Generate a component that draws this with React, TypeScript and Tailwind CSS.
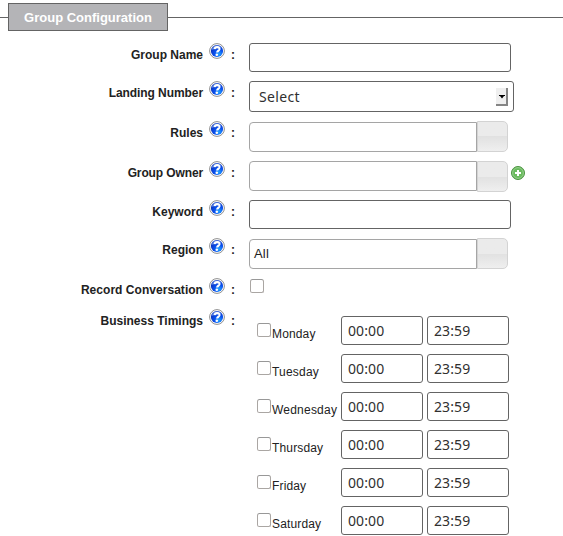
import React from "react";

const help = (
  <svg width="17" height="17" viewBox="0 0 17 17" className="block shrink-0">
    <defs>
      <radialGradient id="helpBlue" cx="0.65" cy="0.75" r="0.8">
        <stop offset="0" stopColor="#1fa4ff" />
        <stop offset="0.45" stopColor="#0a50ee" />
        <stop offset="1" stopColor="#0a2cb0" />
      </radialGradient>
    </defs>
    <circle cx="8" cy="8" r="7.4" fill="#fff" stroke="#8f8f8f" strokeWidth="1" />
    <circle cx="8" cy="8" r="6.1" fill="url(#helpBlue)" />
    <path d="M2.6 7A5.5 5.5 0 0 1 12.8 5Q8 5 2.6 7" fill="#7ba6f5" opacity="0.6" />
    <path d="M5.6 6.2C5.8 4.6 7 4 8.3 4.1C10 4.2 10.8 5.2 10.4 6.5C10 7.6 8.3 7.8 8.1 9.5" fill="none" stroke="#fff" strokeWidth="2.1" />
    <circle cx="7.8" cy="11.7" r="1.3" fill="#fff" />
  </svg>
);

function Row({ label, height, tracking = "", children }: { label: string; height: string; tracking?: string; children: React.ReactNode }) {
  return (
    <div className={`flex items-start ${height}`}>
      <div className={`w-[203px] shrink-0 pt-1 text-right text-xs leading-4 font-bold whitespace-nowrap ${tracking}`}>{label}</div>
      <div className="ml-1.5 w-[17px] shrink-0">{help}</div>
      <div className="ml-[5px] w-[18px] shrink-0 pt-1 text-xs leading-4 font-bold">:</div>
      {children}
    </div>
  );
}

function Combo({ value = "", align = "items-end" }: { value?: string; align?: string }) {
  return (
    <div className={`flex ${align}`}>
      <div className="flex h-[30px] w-[228px] items-center rounded-l-[4px] border border-[#a5a5a5] pl-1 text-[13px] tracking-[0.2px]">{value}</div>
      <div className="h-[31px] w-[31px] rounded-r-[5px] border border-[#d3d3d3] bg-linear-to-b from-[#ebebeb] from-50% via-[#e1e1e1] via-50% to-[#efefef]" />
    </div>
  );
}

const Box = () => <div className="size-3.5 shrink-0 rounded-[2.5px] border border-[#aaa6a3] border-t-[#989898] bg-white" />;

const Time = ({ value }: { value: string }) => (
  <div className="flex h-[29px] w-[82px] items-center rounded-[3px] border border-[#646464] pl-1.5 font-['Noto_Sans',sans-serif] text-sm tracking-[0.1px] text-[#303030]">
    {value}
  </div>
);

const days = [
  { name: "Monday", tracking: "tracking-[0.15px]" },
  { name: "Tuesday", tracking: "tracking-[0.2px]" },
  { name: "Wednesday", tracking: "tracking-[0.22px]" },
  { name: "Thursday", tracking: "tracking-[0.15px]" },
  { name: "Friday", tracking: "tracking-[0.15px]" },
  { name: "Saturday", tracking: "tracking-[0.15px]" },
];

export default function App() {
  return (
    <main className="h-[536px] w-[563px] overflow-hidden bg-white font-['Liberation_Sans',Arial,sans-serif] text-[#222]">
      <div className="flex items-center pt-[3px]">
        <div className="h-px w-2 bg-[#646464]" />
        <div className="flex h-7 w-40 items-center justify-center border border-[#646464] bg-[#b4b4b7] pt-0.5 text-[13px] font-bold whitespace-nowrap text-white">
          Group Configuration
        </div>
        <div className="h-px flex-1 bg-[#646464]" />
      </div>
      <div className="pt-3">
        <Row label="Group Name" height="h-[38px]">
          <div className="h-[29px] w-[262px] rounded-[3px] border border-[#646464]" />
        </Row>
        <Row label="Landing Number" height="h-10" tracking="tracking-[-0.07px]">
          <div className="flex h-[31px] w-[265px] items-center justify-between rounded-[3px] border border-[#646464] pr-[5px] pl-[9px] font-['Noto_Sans',sans-serif] text-sm text-[#303030]">
            <span className="tracking-[0.35px]">Select</span>
            <div className="flex h-[18px] w-3 items-center justify-center border-r-2 border-b-2 border-[#858585] bg-[#efefef]">
              <svg width="6" height="4" viewBox="0 0 6 4" className="mt-0.5 ml-px"><path d="M0 0H6V1H5L3 3.5L1 1H0Z" fill="#000" /></svg>
            </div>
          </div>
        </Row>
        <Row label="Rules" height="h-10"><Combo /></Row>
        <Row label="Group Owner" height="h-[39px]" tracking="tracking-[-0.12px]">
          <Combo align="items-start" />
          <svg width="14" height="14" viewBox="0 0 14 14" className="mt-[5px] ml-[3px]">
            <circle cx="7" cy="7" r="6.5" fill="#5bad51" stroke="#4c9442" />
            <circle cx="7" cy="7" r="5.4" fill="#6abb5e" stroke="#a4d79b" strokeWidth=".8" />
            <path d="M7 4V10M4 7H10" stroke="#fff" strokeWidth="2" />
          </svg>
        </Row>
        <Row label="Keyword" height="h-[38px]">
          <div className="h-[29px] w-[262px] rounded-[3px] border border-[#646464]" />
        </Row>
        <Row label="Region" height="h-10"><Combo value="All" /></Row>
        <Row label="Record Conversation" height="h-[31px]" tracking="tracking-[0.04px]">
          <div className="pt-px pl-px"><Box /></div>
        </Row>
        <Row label="Business Timings" height="h-auto">
          <div className="flex flex-col gap-[9px] pt-[7px] pl-2">
            {days.map((day) => (
              <div key={day.name} className="flex h-[29px] items-start">
                <div className="flex w-[84px] pt-[7px]">
                  <Box />
                  <span className={`ml-px pt-[3px] text-xs leading-4 ${day.tracking}`}>{day.name}</span>
                </div>
                <div className="flex gap-1">
                  <Time value="00:00" />
                  <Time value="23:59" />
                </div>
              </div>
            ))}
          </div>
        </Row>
      </div>
    </main>
  );
}
